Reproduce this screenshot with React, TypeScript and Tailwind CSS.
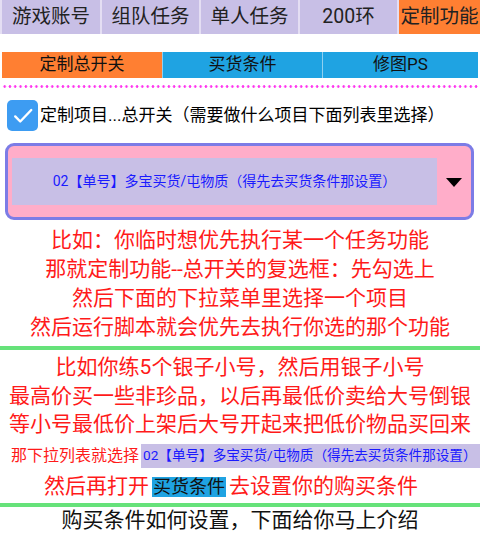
import React from 'react';

const topTabs = [
  { label: '游戏账号', w: 'w-[98px]', active: false },
  { label: '组队任务', w: 'w-[97px]', active: false },
  { label: '单人任务', w: 'w-[97px]', active: false },
  { label: '200环', w: 'w-[97px]', active: false },
  { label: '定制功能', w: 'flex-1', active: true },
];

const subTabs = [
  { label: '定制总开关', w: 'w-[160px]', active: true },
  { label: '买货条件', w: 'w-[159px]', active: false },
  { label: '修图PS', w: 'flex-1', active: false },
];

const redLines = [
  '比如：你临时想优先执行某一个任务功能',
  '那就定制功能--总开关的复选框：先勾选上',
  '然后下面的下拉菜单里选择一个项目',
  '然后运行脚本就会优先去执行你选的那个功能',
];

const exampleLines = [
  '比如你练5个银子小号，然后用银子小号',
  '最高价买一些非珍品，以后再最低价卖给大号倒银',
  '等小号最低价上架后大号开起来把低价物品买回来',
];

const ITEM = '02【单号】多宝买货/屯物质（得先去买货条件那设置）';

const App: React.FC = () => {
  return (
    <div className="w-[480px] h-[536px] overflow-hidden bg-white font-['Roboto','Noto_Sans_CJK_SC',sans-serif]">
      {/* main tabs */}
      <div className="flex h-[34px] gap-[2px] pl-[2px] bg-[#e4def3]">
        {topTabs.map(t => (
          <div
            key={t.label}
            className={`${t.w} flex items-center justify-center text-[19.5px] text-[#222] ${t.active ? 'bg-[#ff7f32]' : 'bg-[#c8bfe6]'}`}
          >
            {t.label}
          </div>
        ))}
      </div>

      {/* sub tabs */}
      <div className="mt-[18px] flex h-[26px] gap-[1px] mx-[2px] bg-[#8fd0f0]">
        {subTabs.map(t => (
          <div
            key={t.label}
            className={`${t.w} flex items-center justify-center text-[17px] text-[#111] ${t.active ? 'bg-[#ff7f32]' : 'bg-[#1fa3e2]'}`}
          >
            {t.label}
          </div>
        ))}
      </div>

      <div className="mt-[7px] mx-[2px] h-[3px] bg-[radial-gradient(circle,#ff33ee_1px,transparent_1.6px)] bg-[length:5.3px_3px]" />

      {/* checkbox */}
      <div className="mt-[12px] flex items-center h-[31px] pl-[7px]">
        <div className="w-[31px] h-[31px] rounded-[5px] bg-[#3d9cf2] flex items-center justify-center">
          <svg width="22" height="22" viewBox="0 0 24 24" fill="none" stroke="white" strokeWidth="2.6" strokeLinecap="round" strokeLinejoin="round">
            <path d="M3.5 12.5l5.5 5.5L21 5.5" />
          </svg>
        </div>
        <span className="ml-[2px] text-[17px] text-black">定制项目...总开关（需要做什么项目下面列表里选择）</span>
      </div>

      {/* dropdown */}
      <div className="mt-[12px] mx-[5px] h-[77px] w-[469px] border-[3px] border-[#7c7ce6] rounded-[9px] bg-[#ffadc9] flex items-center pl-[4px]">
        <div className="w-[425px] h-[47px] bg-[#c8bfe6] flex items-center justify-center">
          <span className="text-[14px] text-[#1a1aff]">{ITEM}</span>
        </div>
        <div className="flex-1 flex justify-center">
          <svg width="16" height="9" viewBox="0 0 16 9" className="mt-[1px]">
            <path d="M0 0h16L8 9z" fill="black" />
          </svg>
        </div>
      </div>

      {/* explanation */}
      <div className="mt-[6px] text-center text-[21px] leading-[29px] text-[#ff1a1a]">
        {redLines.map(l => (
          <div key={l}>{l}</div>
        ))}
      </div>

      <div className="mt-[4px] h-[4px] bg-[#66e27a]" />

      <div className="mt-[3px] text-center text-[21px] leading-[28.5px] text-[#ff1a1a]">
        {exampleLines.map(l => (
          <div key={l}>{l}</div>
        ))}
      </div>

      <div className="mt-[5px] flex items-center h-[24px] pl-[11px]">
        <span className="shrink-0 text-[16px] text-[#ff1a1a] whitespace-nowrap">那下拉列表就选择</span>
        <div className="ml-[2px] flex-1 min-w-0 h-full bg-[#c8bfe6] flex items-center pl-[2px]">
          <span className="text-[13.6px] text-[#1a1aff] whitespace-nowrap">{ITEM}</span>
        </div>
      </div>

      <div className="mt-[5px] h-[28px] flex items-center justify-center pr-[18px] text-[21px] text-[#ff1a1a]">
        <span>然后再打开</span>
        <span className="mx-[3px] px-[1px] bg-[#1fa3e2] text-[18px] leading-[20px] text-[#111]">买货条件</span>
        <span>去设置你的购买条件</span>
      </div>

      <div className="mt-[2px] h-[4px] bg-[#66e27a]" />

      <div className="h-[29px] flex items-center justify-center text-[21px] text-[#111]">
        购买条件如何设置，下面给你马上介绍
      </div>
    </div>
  );
};

export default App;
